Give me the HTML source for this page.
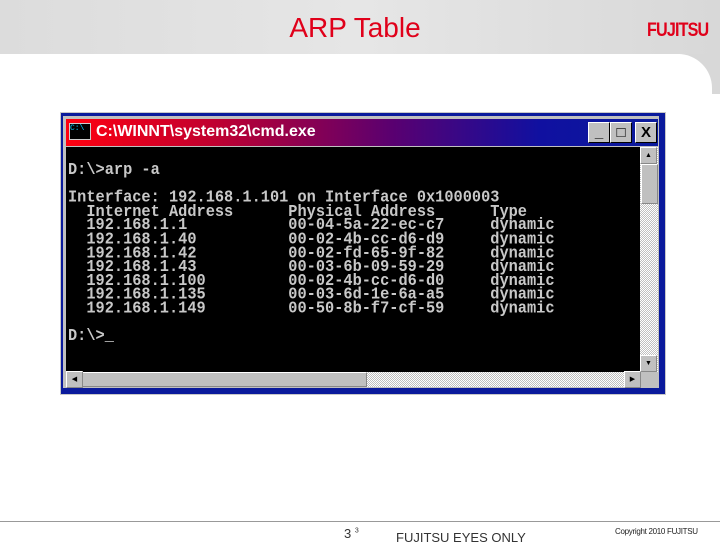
<!DOCTYPE html>
<html><head><meta charset="utf-8"><style>
html,body{margin:0;padding:0}
body{width:720px;height:540px;position:relative;overflow:hidden;background:#fff;font-family:"Liberation Sans",sans-serif}
.hdr{position:absolute;left:0;top:0;width:720px;height:54px;background:linear-gradient(90deg,#dcdcdc,#e6e6e6 50%,#d8d8d8)}
.rgray{position:absolute;left:680px;top:54px;width:40px;height:40px;background:#d8d8d8}
.rwhite{position:absolute;left:0;top:54px;width:712px;height:60px;background:#fff;border-top-right-radius:34px}
.title{position:absolute;left:0;width:710px;top:12px;text-align:center;font-size:28px;color:#e0001a}
.logo{position:absolute;left:647px;top:20px;font-size:19px;font-weight:bold;color:#e0001a;letter-spacing:-1px;transform:scaleX(.85);transform-origin:left}
.win{position:absolute;left:61px;top:113px;width:604px;height:281px;background:#0a1a9c;box-shadow:0 0 0 1px #c8c8c8}
.frame{position:absolute;left:63px;top:116px;width:596px;height:272px;background:#c0c0c0}
.tb{position:absolute;left:66px;top:119px;width:592px;height:27px;background:linear-gradient(90deg,#ff0010 0%,#c00030 25%,#5a0070 55%,#1010a0 80%,#0a1a9c 100%)}
.tt{position:absolute;left:96px;top:123px;color:#fff;font-weight:bold;font-size:16px;font-family:"Liberation Sans",sans-serif}
.ico{position:absolute;left:69px;top:123px;width:20px;height:15px;background:#000;border:1px solid #ccc;color:#0cf;font-size:8px;line-height:9px;font-family:"Liberation Mono",monospace}
.btn{position:absolute;top:122px;width:20px;height:19px;background:#c0c0c0;border-top:1px solid #fff;border-left:1px solid #fff;border-right:1px solid #000;border-bottom:1px solid #000;font-weight:bold;font-size:15px;text-align:center;line-height:19px}
.term{position:absolute;left:66px;top:147px;width:574px;height:225px;background:#000}
pre{position:absolute;left:68px;top:163px;margin:0;color:#c8c8c8;font-family:"Liberation Mono",monospace;font-size:15.3px;line-height:12.6px;font-weight:bold;transform:scaleY(1.1);transform-origin:top left}
.vs{position:absolute;left:640px;top:147px;width:18px;height:225px;background:repeating-conic-gradient(#fff 0 25%,#c0c0c0 0 50%) 0 0/2px 2px}
.hs{position:absolute;left:66px;top:372px;width:574px;height:15px;background:repeating-conic-gradient(#fff 0 25%,#c0c0c0 0 50%) 0 0/2px 2px}
.thumbv{position:absolute;left:641px;top:164px;width:15px;height:38px;background:#c0c0c0;border:1px solid #888;border-top-color:#fff;border-left-color:#fff}
.thumbh{position:absolute;left:82px;top:372px;width:283px;height:13px;background:#c0c0c0;border:1px solid #888;border-top-color:#fff;border-left-color:#fff}
.sb{position:absolute;width:15px;height:15px;background:#c0c0c0;border:1px solid #888;border-top-color:#fff;border-left-color:#fff;font-size:7px;text-align:center;line-height:15px}
.foot{position:absolute;left:0;top:521px;width:720px;height:1px;background:#999}
</style></head><body>
<div class="hdr"></div><div class="rgray"></div><div class="rwhite"></div>
<div class="title">ARP Table</div>
<div class="logo">FUJITSU</div>
<div class="win"></div><div class="frame"></div>
<div class="tb"></div>
<div class="ico">C:\</div>
<div class="tt">C:\WINNT\system32\cmd.exe</div>
<div class="btn" style="left:588px">_</div>
<div class="btn" style="left:610px">□</div>
<div class="btn" style="left:635px">X</div>
<div class="term"></div>
<pre>D:\&gt;arp -a

Interface: 192.168.1.101 on Interface 0x1000003
  Internet Address      Physical Address      Type
  192.168.1.1           00-04-5a-22-ec-c7     dynamic
  192.168.1.40          00-02-4b-cc-d6-d9     dynamic
  192.168.1.42          00-02-fd-65-9f-82     dynamic
  192.168.1.43          00-03-6b-09-59-29     dynamic
  192.168.1.100         00-02-4b-cc-d6-d0     dynamic
  192.168.1.135         00-03-6d-1e-6a-a5     dynamic
  192.168.1.149         00-50-8b-f7-cf-59     dynamic

D:\&gt;_</pre>
<div class="vs"></div><div class="hs"></div>
<div class="thumbv"></div><div class="thumbh"></div>
<div class="sb" style="left:640px;top:147px">▲</div>
<div class="sb" style="left:640px;top:355px">▼</div>
<div class="sb" style="left:66px;top:371px">◀</div>
<div class="sb" style="left:624px;top:371px">▶</div>
<div class="foot"></div>
<div style="position:absolute;left:344px;top:526px;font-size:13px;color:#333">3 <sup style="font-size:7px">3</sup></div>
<div style="position:absolute;left:396px;top:530px;font-size:13px;color:#333">FUJITSU EYES ONLY</div>
<div style="position:absolute;left:615px;top:527px;font-size:8px;color:#222;letter-spacing:-.3px">Copyright 2010 FUJITSU</div>
</body></html>
